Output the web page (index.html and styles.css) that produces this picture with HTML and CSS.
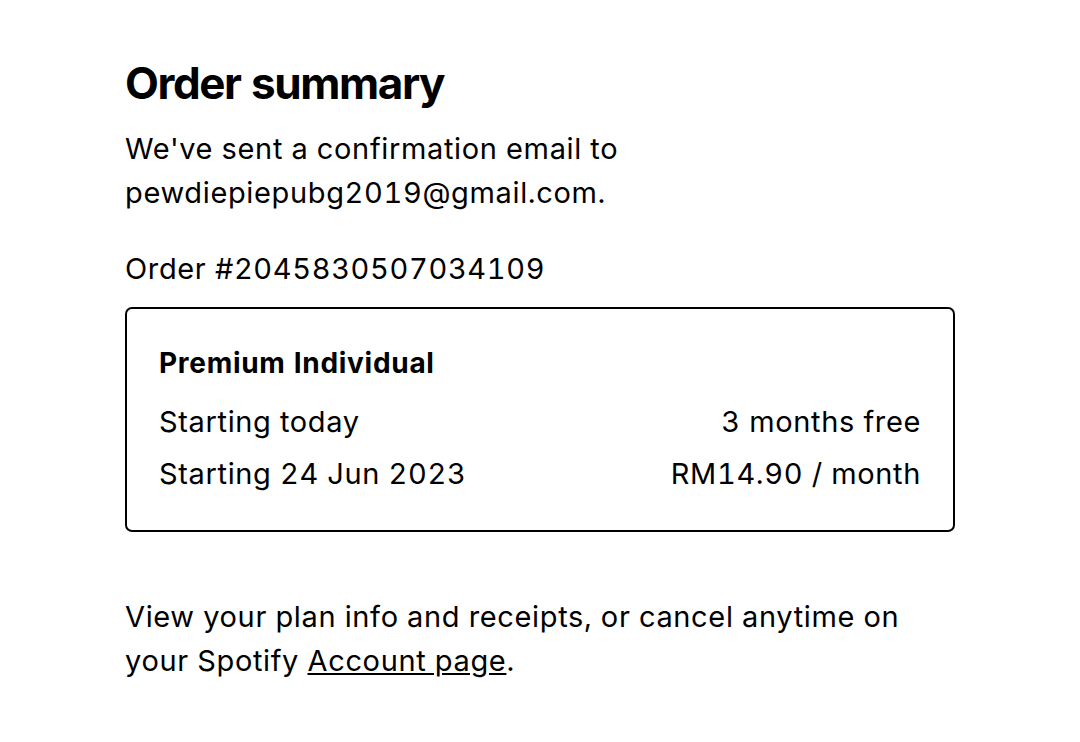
FILE: index.html
```html
<!DOCTYPE html>
<html lang="en">
<head>
  <meta charset="UTF-8" />
  <meta name="viewport" content="width=device-width, initial-scale=1.0"/>
  <title>Order summary</title>
  <link rel="stylesheet" href="styles.css">
</head>
<body>
  <div class="resumen">
    <h1>Order summary</h1>
    <p class="aviso">We've sent a confirmation email to<br>pewdiepiepubg2019@gmail.com.</p>
    <p class="pedido">Order #2045830507034109</p>

    <div class="plan">
      <h2>Premium Individual</h2>
      <div class="fila">
        <span>Starting today</span>
        <span>3 months free</span>
      </div>
      <div class="fila">
        <span>Starting 24 Jun 2023</span>
        <span>RM14.90 / month</span>
      </div>
    </div>

    <p class="pie">View your plan info and receipts, or cancel anytime on<br>your Spotify <a href="#">Account page</a>.</p>
  </div>
</body>
</html>
```

FILE: styles.css
```css
body {
  margin: 0;
  background-color: #fff;
  color: #000;
  font-family: Inter, "Noto Sans", sans-serif;
  font-variant-numeric: tabular-nums;
}

.resumen {
  max-width: 830px;
  margin: 0 auto;
  padding-top: 55px;
}

h1 {
  font-size: 44px;
  font-weight: 700;
  letter-spacing: -1.4px;
  line-height: 56px;
  margin: 0 0 16px;
}

.aviso, .pedido, .pie, .fila {
  font-size: 29px;
  letter-spacing: 0.65px;
}

.aviso, .pedido, .pie {
  line-height: 44px;
  margin: 0;
}

.pedido {
  margin-top: 32px;
}

.plan {
  margin-top: 16px;
  border: 2px solid #000;
  border-radius: 7px;
  padding: 30px 32px 30px;
}

.plan h2 {
  font-size: 28px;
  font-weight: 700;
  letter-spacing: 0.7px;
  line-height: 48px;
  margin: 0 0 9px;
}

.fila {
  display: flex;
  justify-content: space-between;
  line-height: 52px;
}

.pie {
  margin-top: 63px;
}

.pie a {
  color: #000;
}
```
